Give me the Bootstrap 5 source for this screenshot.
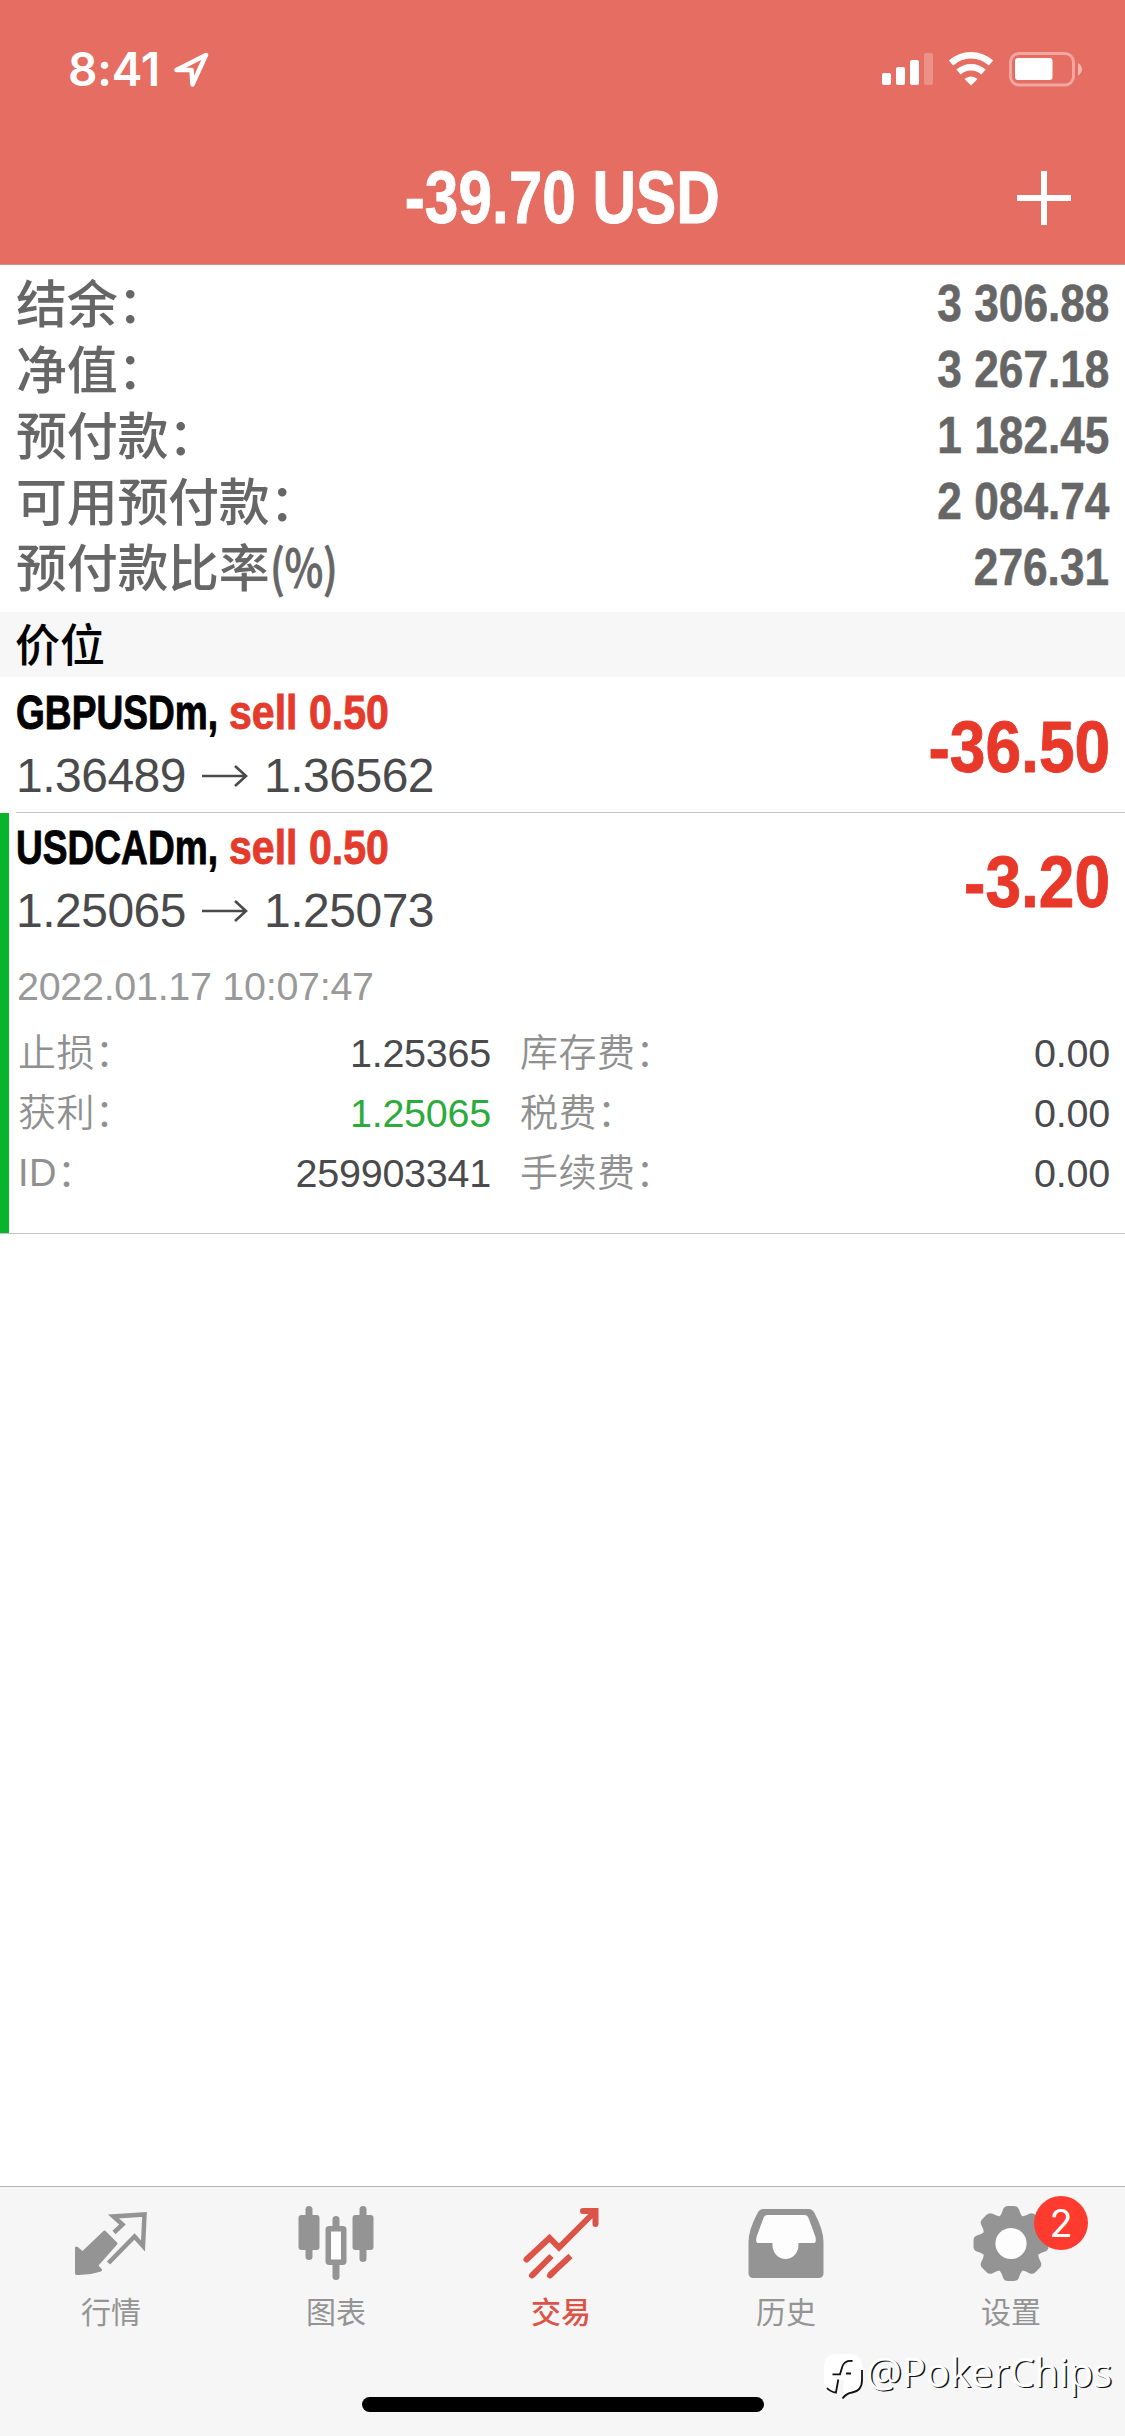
<!DOCTYPE html>
<html lang="zh-CN">
<head>
<meta charset="utf-8">
<meta name="viewport" content="width=device-width, initial-scale=1">
<title>交易</title>
<link href="https://cdn.jsdelivr.net/npm/bootstrap@5.3.0/dist/css/bootstrap.min.css" rel="stylesheet">
<style>
body{font-family:"Liberation Sans","Noto Sans CJK SC",sans-serif;height:2436px;background:#fff;overflow:hidden}
.phone{width:1125px;height:2436px}
.squeeze{display:inline-block;white-space:nowrap}
.total,.symbol-line,.profit{-webkit-text-stroke:.9px currentColor}
/* header */
.topbar{height:265px;background:#e56d61;border-bottom:1px solid #c9958f;color:#fff}
.status-row{height:88px;padding:51px 43px 0 68px}
.clock{font:600 46px/36px Inter,sans-serif;letter-spacing:-.2px;width:90px}
.title-row{height:176px;padding-top:44px}
.total{font-size:74px;line-height:90px;font-weight:700;transform:scaleX(.815)}
.add-btn{right:54px}
/* summary */
.summary{height:347px;padding:5px 16px 0 16px;color:#666}
.sum-row{height:66px}
.sum-label{font:500 51px/62px "Noto Sans CJK SC",sans-serif;letter-spacing:-.3px}
.percent{transform:scaleX(.81);transform-origin:left;-webkit-text-stroke:.8px currentColor}
.sum-value{font-size:52px;line-height:67px;font-weight:700;transform:scaleX(.85);transform-origin:right;-webkit-text-stroke:.6px currentColor}
.section-bar{height:65px;background:#f7f7f7;color:#000;font:500 45px/62px "Noto Sans CJK SC",sans-serif;padding-left:15px}
/* positions */
.position-item{padding:8px 15px 0 16px}
.position-head{height:127px}
.symbol-line{height:56px;font-size:49px;line-height:55px;font-weight:700}
.symbol{color:#000;width:213px}
.symbol .squeeze,.side-lot{transform-origin:left}
.symbol .squeeze{transform:scaleX(.757)}
.side-lot{color:#e43b2c;transform:scaleX(.838)}
.price-line{height:69px;font-size:48px;line-height:69px;letter-spacing:-.5px;color:#4a4a4c}
.price-line svg{margin-left:15px;margin-right:15px}
.profit{font-size:72px;line-height:70px;font-weight:700;color:#e8382a;transform:scaleX(.89);transform-origin:right;margin-bottom:3px}
.rule{height:1px;background:#c4c4c6}
.selected-pos{height:420px;border-left:9px solid #06b52c;padding-left:7px;padding-top:7px}
.open-time{font-size:39.5px;line-height:44px;letter-spacing:-.3px;color:#999;padding:17px 0 0 1px;height:76px}
.detail-row{height:60px;font-size:39.5px;line-height:60px;letter-spacing:-.25px;color:#4a4a4c}
.detail-label{font:350 38px/61px "Liberation Sans","Noto Sans CJK SC",sans-serif;letter-spacing:.5px;color:#909090;padding-left:2px}
.col-a{width:475px}
.col-b{margin-left:27px}
.profit-green{color:#2bab3a}
/* tab bar */
.tabs{height:250px;background:#f6f6f6;border-top:1px solid #b2b2b2}
.tab-item{width:225px;height:150px;padding:14px 3px 0 0;color:#949494;font:400 30px/46px "Noto Sans CJK SC",sans-serif}
.tab-item.active{color:#dc5347;font-weight:500}
.tab-item svg{display:block;width:90px;height:84px;margin-bottom:2px}
.count{left:134px;top:9px;width:54px;height:54px;background:#ff3b30;color:#fff;font:400 38px/54px Inter,sans-serif}
.home-bar{width:402px;height:15px;background:#000;left:362px;top:210px}
.signature{left:823px;top:160px;color:#fff;font:400 40px/50px "Open Sans",sans-serif;letter-spacing:-.1px;text-shadow:1.5px 1px 0 #111}
</style>
</head>
<body>
<main class="phone d-flex flex-column">
  <header class="topbar">
    <div class="status-row d-flex justify-content-between">
      <div class="d-flex">
        <span class="clock">8:41</span>
        <svg class="ms-3" width="36" height="36" viewBox="0 0 36 36" fill="none" stroke="#fff" stroke-width="4.500" stroke-linejoin="round"><path d="M32 4 2.500 19H17.500L18.500 33.500z"/></svg>
      </div>
      <svg width="202" height="36" viewBox="0 0 202 36">
        <g fill="#fff">
          <rect x="2" y="22" width="9" height="12" rx="2"/><rect x="16" y="16" width="9" height="18" rx="2"/><rect x="30" y="9" width="9" height="25" rx="2"/><rect x="44" y="2" width="9" height="32" rx="2" opacity=".25"/>
          <path d="M91 34.500 84.500 28a9.500 9.500 0 0 1 13 0z"/>
          <rect x="135" y="7" width="37.500" height="22" rx="3"/>
          <path d="M198 12q4.500 2.500 4 6.500-.5 4-4 6z" opacity=".5"/>
        </g>
        <g fill="none" stroke="#fff" stroke-width="6.500"><path d="M71 12a29.500 29.500 0 0 1 40 0"/><path d="M78.500 21a18.500 18.500 0 0 1 25 0"/></g>
        <rect x="130.500" y="2.500" width="63" height="31.500" rx="8.500" fill="none" stroke="#fff" stroke-width="3" opacity=".4"/>
      </svg>
    </div>
    <div class="title-row position-relative d-flex align-items-center justify-content-center">
      <h1 class="total squeeze m-0">-39.70 USD</h1>
      <svg class="add-btn position-absolute" width="54" height="54" viewBox="0 0 54 54"><path d="M0 27h54M27 0v54" stroke="#fff" stroke-width="6"/></svg>
    </div>
  </header>

  <section class="summary">
    <div class="sum-row d-flex justify-content-between"><span class="sum-label">结余：</span><span class="sum-value squeeze">3 306.88</span></div>
    <div class="sum-row d-flex justify-content-between"><span class="sum-label">净值：</span><span class="sum-value squeeze">3 267.18</span></div>
    <div class="sum-row d-flex justify-content-between"><span class="sum-label">预付款：</span><span class="sum-value squeeze">1 182.45</span></div>
    <div class="sum-row d-flex justify-content-between"><span class="sum-label">可用预付款：</span><span class="sum-value squeeze">2 084.74</span></div>
    <div class="sum-row d-flex justify-content-between"><span class="sum-label">预付款比率<span class="percent squeeze">(%)</span></span><span class="sum-value squeeze">276.31</span></div>
  </section>

  <div class="section-bar">价位</div>

  <section>
    <article class="position-item">
      <div class="position-head d-flex justify-content-between">
        <div>
          <div class="symbol-line d-flex"><span class="symbol"><span class="squeeze">GBPUSDm,</span></span><span class="side-lot squeeze">sell 0.50</span></div>
          <div class="price-line d-flex align-items-center"><span>1.36489</span><svg width="48" height="24" viewBox="0 0 48 24" fill="none" stroke="#4a4a4c" stroke-width="2.600"><path d="M1 12h44M34 2l11 10-11 10"/></svg><span>1.36562</span></div>
        </div>
        <span class="profit squeeze align-self-center">-36.50</span>
      </div>
    </article>
    <div class="rule ms-3"></div>
    <article class="position-item selected-pos">
      <div class="position-head d-flex justify-content-between">
        <div>
          <div class="symbol-line d-flex"><span class="symbol"><span class="squeeze">USDCADm,</span></span><span class="side-lot squeeze">sell 0.50</span></div>
          <div class="price-line d-flex align-items-center"><span>1.25065</span><svg width="48" height="24" viewBox="0 0 48 24" fill="none" stroke="#4a4a4c" stroke-width="2.600"><path d="M1 12h44M34 2l11 10-11 10"/></svg><span>1.25073</span></div>
        </div>
        <span class="profit squeeze align-self-center">-3.20</span>
      </div>
      <div class="open-time">2022.01.17 10:07:47</div>
      <div class="detail-row d-flex"><div class="col-a d-flex justify-content-between"><span class="detail-label">止损：</span><span>1.25365</span></div><div class="col-b flex-fill d-flex justify-content-between"><span class="detail-label">库存费：</span><span>0.00</span></div></div>
      <div class="detail-row d-flex"><div class="col-a d-flex justify-content-between"><span class="detail-label">获利：</span><span class="profit-green">1.25065</span></div><div class="col-b flex-fill d-flex justify-content-between"><span class="detail-label">税费：</span><span>0.00</span></div></div>
      <div class="detail-row d-flex"><div class="col-a d-flex justify-content-between"><span class="detail-label">ID：</span><span>259903341</span></div><div class="col-b flex-fill d-flex justify-content-between"><span class="detail-label">手续费：</span><span>0.00</span></div></div>
    </article>
    <div class="rule"></div>
  </section>

  <nav class="tabs mt-auto position-relative d-flex">
    <div class="tab-item d-flex flex-column align-items-center">
      <svg viewBox="66 2201 90 84"><path fill="#949494" stroke="#949494" stroke-width="3" stroke-linejoin="round" d="M76.500 2248v25.500q12 .5 24-3.500l-4-4.500L116 2243.500 104.500 2232 82.500 2253z"/><path fill="none" stroke="#949494" stroke-width="4.500" d="M114 2232.500l8.500-8L113.500 2216.500l31-2-1.500 31.500-8.500-9.500L108.500 2263"/></svg>
      <span>行情</span>
    </div>
    <div class="tab-item d-flex flex-column align-items-center">
      <svg viewBox="291.500 2201 90 84" fill="#949494"><rect x="299" y="2215" width="21" height="35" rx="3"/><rect x="306" y="2206" width="7" height="54" rx="3.500"/><rect x="353" y="2215" width="21" height="35" rx="3"/><rect x="360" y="2206" width="7" height="56" rx="3.500"/><rect x="333" y="2216" width="7" height="14" rx="3.500"/><rect x="333" y="2260" width="7" height="20" rx="3.500"/><rect x="328.750" y="2228.750" width="15.500" height="33.500" rx="1" fill="#fdfdfd" stroke="#949494" stroke-width="5.500"/></svg>
      <span>图表</span>
    </div>
    <div class="tab-item active d-flex flex-column align-items-center">
      <svg viewBox="516.500 2201 90 84" fill="none" stroke="#dc5347" stroke-width="6" stroke-linecap="round"><path d="M527 2259.500l23-21.500 9.500 9.500L595 2212M583.500 2211H596v13"/><path stroke-linecap="butt" d="M533 2275l19-19M550 2275.500l21-19.500"/><path d="M532.500 2275.500l4-4M550.500 2275.500l4-4"/></svg>
      <span>交易</span>
    </div>
    <div class="tab-item d-flex flex-column align-items-center">
      <svg viewBox="741.500 2201 90 84"><path fill="#949494" d="M764 2209h45q4 0 6 4 9 17 9 29v31q0 5-5 5h-65q-5 0-5-5v-31q0-12 9-29 2-4 6-4z"/><path fill="#fdfdfd" d="M768 2215h37q3 0 4 3l7 19q1 6-1 6h-16v2a12.500 13.500 0 0 1-26 0v-2h-15q-2 0-1-6l7-19q1-3 4-3z"/></svg>
      <span>历史</span>
    </div>
    <div class="tab-item position-relative d-flex flex-column align-items-center">
      <svg viewBox="966.500 2201 90 84"><g fill="#949494" transform="translate(1011.500 2243.500)"><circle r="29"/><g id="teeth"><path id="tooth" d="M-12-26q3-4 4-8 1.200-3.500 5-3.500h6q3.800 0 5 3.500 1 4 4 8z"/><use href="#tooth" transform="rotate(45)"/><use href="#tooth" transform="rotate(90)"/><use href="#tooth" transform="rotate(135)"/></g><use href="#teeth" transform="rotate(180)"/><circle r="15.600" fill="#fdfdfd"/></g></svg>
      <span>设置</span>
      <span class="count position-absolute rounded-circle text-center">2</span>
    </div>
    <div class="home-bar position-absolute rounded-pill"></div>
    <div class="signature position-absolute d-flex">
      <svg width="43" height="54" viewBox="0 0 43 54"><path d="M14 7h12q13 0 13 13v13q0 11-10 12.500-5 .5-9.500 5.500L21 33h-5l-2.500 12.500Q1 43 1 32V20Q1 7 14 7z" fill="#fff"/><g fill="none" stroke="#111" stroke-width="1.800"><path d="M29.500 14q-7.500-1-10 5l-2.500 8.300H9.500M23 26.500h5M15.300 32.500 12.900 45.700Q7 44.500 4 41"/><path d="M39 23v10q0 11-10 12.500-5.500.7-9.500 6"/></g></svg>
      <span>@PokerChips</span>
    </div>
  </nav>
</main>
<script src="https://cdn.jsdelivr.net/npm/bootstrap@5.3.0/dist/js/bootstrap.bundle.min.js"></script>
</body>
</html>
